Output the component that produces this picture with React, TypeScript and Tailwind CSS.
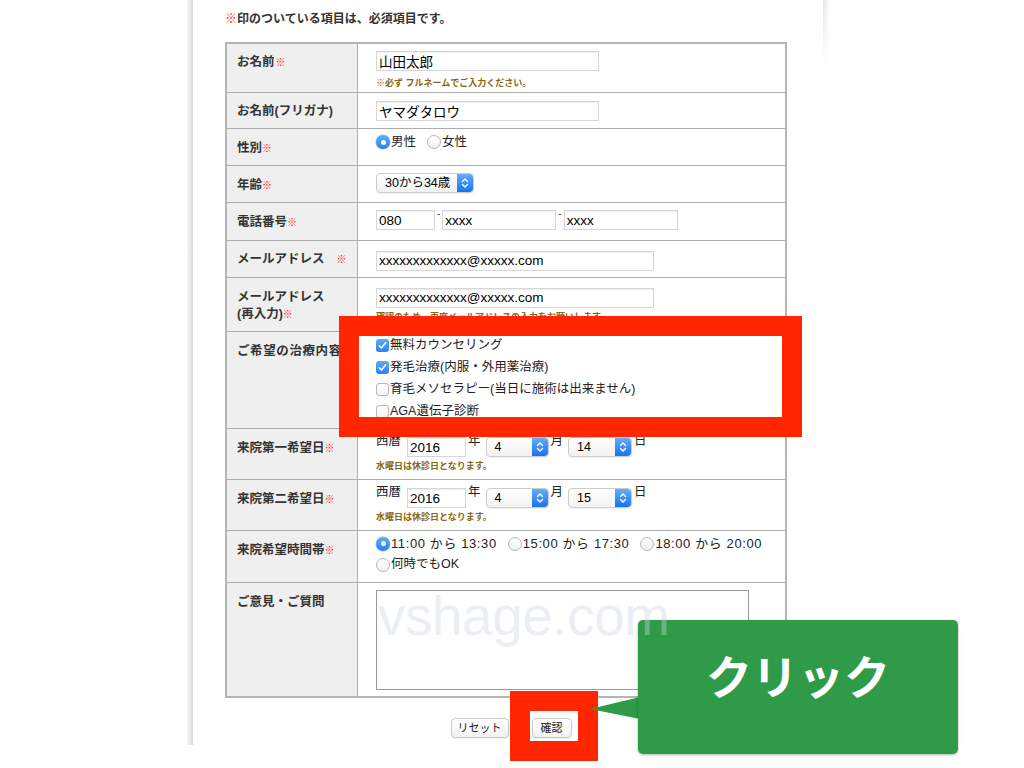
import React from "react";

const Req = ({ className = "" }: { className?: string }) => (
  <span className={`text-[10px] font-bold text-[#ff1a1a] ${className}`}>※</span>
);

const TextInput = ({ value, className }: { value: string; className: string }) => (
  <input
    readOnly
    value={value}
    className={`h-[20px] border border-[#d6d6d6] bg-white px-[2px] font-['Liberation_Sans','Noto_Sans_CJK_JP',sans-serif] text-[13.5px] leading-[18px] text-black shadow-[inset_0_1px_1px_rgba(0,0,0,0.07)] outline-none ${className}`}
  />
);

const Stepper = () => (
  <div className="flex w-[16px] shrink-0 items-center justify-center rounded-r-[4px] bg-gradient-to-b from-[#62adfb] to-[#1672ee]">
    <svg width="10" height="14" viewBox="0 0 10 14" fill="none">
      <path d="M2.5 5.5 L5 3 L7.5 5.5" stroke="white" strokeWidth="1.4" strokeLinecap="round" strokeLinejoin="round" />
      <path d="M2.5 8.5 L5 11 L7.5 8.5" stroke="white" strokeWidth="1.4" strokeLinecap="round" strokeLinejoin="round" />
    </svg>
  </div>
);

const Select = ({ value, className }: { value: string; className: string }) => (
  <div
    className={`flex h-[20px] shrink-0 items-stretch rounded-[4px] border border-[#cdcdcd] bg-gradient-to-b from-white to-[#f2f2f2] shadow-[0_1px_1px_rgba(0,0,0,0.06)] ${className}`}
  >
    <div className="flex-1 truncate pl-[8px] text-[12.5px] leading-[18px] text-black">{value}</div>
    <Stepper />
  </div>
);

const Radio = ({ checked, className = "" }: { checked?: boolean; className?: string }) =>
  checked ? (
    <span className={`flex h-[14px] w-[14px] shrink-0 items-center justify-center rounded-full bg-gradient-to-b from-[#5eaaf9] to-[#2a80f0] shadow-[0_0_0_0.5px_rgba(30,100,200,0.5)] ${className}`}>
      <span className="block h-[5px] w-[5px] rounded-full bg-white" />
    </span>
  ) : (
    <span className={`block h-[14px] w-[14px] shrink-0 rounded-full border border-[#b8b8b8] bg-gradient-to-b from-white to-[#f1f1f1] ${className}`} />
  );

const Check = ({ checked }: { checked?: boolean }) =>
  checked ? (
    <span className="flex h-[13px] w-[13px] shrink-0 items-center justify-center rounded-[3px] bg-gradient-to-b from-[#5eaaf9] to-[#2a80f0]">
      <svg width="11" height="11" viewBox="0 0 11 11" fill="none">
        <path d="M2.3 5.8 L4.4 8 L8.7 2.8" stroke="white" strokeWidth="1.6" strokeLinecap="round" strokeLinejoin="round" />
      </svg>
    </span>
  ) : (
    <span className="block h-[13px] w-[13px] shrink-0 rounded-[3px] border border-[#b8b8b8] bg-gradient-to-b from-white to-[#f4f4f4]" />
  );

const Note = ({ children, className = "" }: { children: React.ReactNode; className?: string }) => (
  <div className={`text-[9px] font-bold leading-[12px] text-[#8a6614] ${className}`}>{children}</div>
);

const Row = ({
  label,
  h,
  labelPt = "pt-[11px]",
  contentPt,
  last,
  children,
}: {
  label: React.ReactNode;
  h: string;
  labelPt?: string;
  contentPt: string;
  last?: boolean;
  children: React.ReactNode;
}) => (
  <div className={`flex ${h} ${last ? "" : "border-b border-[#acacac]"}`}>
    <div className={`w-[131px] shrink-0 border-r border-[#acacac] bg-[#efefef] pl-[10px] text-[12.5px] font-bold leading-[17px] text-[#333] ${labelPt}`}>
      {label}
    </div>
    <div className={`min-w-0 flex-1 pl-[18px] ${contentPt}`}>{children}</div>
  </div>
);

const DateRow = ({ day }: { day: string }) => (
  <div>
    <div className="flex items-start text-[12.5px] leading-[18px] text-[#222]">
      <span>西暦</span>
      <TextInput value="2016" className="ml-[6px] mt-[5px] w-[59px]" />
      <span className="ml-[2px]">年</span>
      <Select value="4" className="ml-[5px] mt-[5px] w-[63px]" />
      <span className="ml-[2px]">月</span>
      <Select value={day} className="ml-[5px] mt-[5px] w-[64px]" />
      <span className="ml-[2px]">日</span>
    </div>
    <Note className="mt-[3px]">水曜日は休診日となります。</Note>
  </div>
);

export default function App() {
  return (
    <div className="relative h-[768px] w-[1024px] overflow-hidden bg-white font-['Liberation_Sans','Noto_Sans_CJK_JP',sans-serif] text-[#333]">
      <div className="flex">
        <div className="ml-[187px] h-[745px] w-[6px] bg-gradient-to-r from-[#f5f5f5] to-[#dadada]" />
        <main className="w-[630px] pl-[32px] pt-[11px]">
          <div className="text-[12px] font-bold leading-[16px] text-[#333]">
            <span className="text-[#ff2a2a]">※</span>印のついている項目は、必須項目です。
          </div>

          <div className="mt-[15px] w-[562px] border-2 border-[#b4b4b4]">
            <Row label={<>お名前<Req className="ml-[1px]" /></>} h="h-[49px]" labelPt="pt-[10px]" contentPt="pt-[6px]">
              <TextInput value="山田太郎" className="w-[223px]" />
              <Note className="mt-[3px]">※必ず フルネームでご入力ください。</Note>
            </Row>

            <Row label="お名前(フリガナ)" h="h-[36px]" labelPt="pt-[10px]" contentPt="pt-[7px]">
              <TextInput value="ヤマダタロウ" className="w-[223px]" />
            </Row>

            <Row label={<>性別<Req /></>} h="h-[37px]" contentPt="pt-[3px]">
              <div className="flex h-[20px] items-center text-[12.5px] text-[#222]">
                <Radio checked />
                <span className="ml-[1px]">男性</span>
                <Radio className="ml-[11px]" />
                <span className="ml-[1px]">女性</span>
              </div>
            </Row>

            <Row label={<>年齢<Req /></>} h="h-[37px]" contentPt="pt-[7px]">
              <Select value="30から34歳" className="w-[98px]" />
            </Row>

            <Row label={<>電話番号<Req /></>} h="h-[38px]" contentPt="pt-[7px]">
              <div className="flex items-start">
                <TextInput value="080" className="w-[59px]" />
                <span className="mx-[2px] text-[10px] leading-[8px] text-[#444]">-</span>
                <TextInput value="xxxx" className="w-[114px]" />
                <span className="mx-[2px] text-[10px] leading-[8px] text-[#444]">-</span>
                <TextInput value="xxxx" className="w-[114px]" />
              </div>
            </Row>

            <Row label={<>メールアドレス<Req className="ml-[12px]" /></>} h="h-[37px]" labelPt="pt-[10px]" contentPt="pt-[7px]">
              <TextInput value="xxxxxxxxxxxxx@xxxxx.com" className="w-[278px]" />
            </Row>

            <Row label={<>メールアドレス<br />(再入力)<Req /></>} h="h-[54px]" labelPt="pt-[11px]" contentPt="pt-[7px]">
              <TextInput value="xxxxxxxxxxxxx@xxxxx.com" className="w-[278px]" />
              <Note className="mt-[2px]">確認のため、再度メールアドレスの入力をお願いします。</Note>
            </Row>

            <Row label={<span className="tracking-[0.6px]">ご希望の治療内容</span>} h="h-[97px]" contentPt="pt-[2px]">
              <div className="text-[12.5px] leading-[22px] text-[#222]">
                <div className="flex items-center"><Check checked /><span className="ml-[1px]">無料カウンセリング</span></div>
                <div className="flex items-center"><Check checked /><span className="ml-[1px]">発毛治療(内服・外用薬治療)</span></div>
                <div className="flex items-center"><Check /><span className="ml-[1px]">育毛メソセラピー(当日に施術は出来ません)</span></div>
                <div className="flex items-center"><Check /><span className="ml-[1px]">AGA遺伝子診断</span></div>
              </div>
            </Row>

            <Row label={<>来院第一希望日<Req /></>} h="h-[51px]" contentPt="pt-[3px]">
              <DateRow day="14" />
            </Row>

            <Row label={<>来院第二希望日<Req /></>} h="h-[51px]" contentPt="pt-[3px]">
              <DateRow day="15" />
            </Row>

            <Row label={<>来院希望時間帯<Req /></>} h="h-[52px]" contentPt="pt-[2px]">
              <div className="text-[13px] leading-[21px] text-[#222]">
                <div className="flex items-center">
                  <Radio checked />
                  <span className="ml-[1px] tracking-[0.6px]">11:00 から 13:30</span>
                  <Radio className="ml-[11px]" />
                  <span className="ml-[1px] tracking-[0.6px]">15:00 から 17:30</span>
                  <Radio className="ml-[11px]" />
                  <span className="ml-[1px] tracking-[0.6px]">18:00 から 20:00</span>
                </div>
                <div className="flex items-center">
                  <Radio />
                  <span className="ml-[1px] text-[12.5px]">何時でもOK</span>
                </div>
              </div>
            </Row>

            <Row label="ご意見・ご質問" h="h-[113px]" contentPt="pt-[7px]" last>
              <div className="h-[100px] w-[373px] border border-[#9a9a9a] bg-white" />
            </Row>
          </div>

          <div className="mt-[20px] flex w-[562px] justify-center gap-[23px] pl-[10px]">
            <button className="h-[20px] w-[58px] rounded-[4px] border border-[#c8c8c8] bg-gradient-to-b from-white to-[#f2f2f2] text-[11px] leading-[18px] text-[#222] shadow-[0_1px_1px_rgba(0,0,0,0.06)]">
              リセット
            </button>
            <button className="h-[20px] w-[40px] rounded-[4px] border border-[#c8c8c8] bg-gradient-to-b from-white to-[#f2f2f2] text-[11px] leading-[18px] text-[#222] shadow-[0_1px_1px_rgba(0,0,0,0.06)]">
              確認
            </button>
          </div>
        </main>
        <div className="h-[66px] w-[7px] bg-gradient-to-r from-[#e4e4e4] to-transparent [mask-image:linear-gradient(to_bottom,black,transparent)]" />
      </div>

      {/* annotation frames */}
      <div className="pointer-events-none absolute left-[339px] top-[316px] h-[121px] w-[463px] border-[20px] border-[#ff2600]" />
      <div className="pointer-events-none absolute left-[510px] top-[691px] h-[70px] w-[88px] border-[20px] border-[#ff2600]" />

      {/* callout */}
      <svg className="absolute left-[590px] top-[697px]" width="50" height="23" viewBox="0 0 50 23">
        <polygon points="0,12 50,0 50,22" fill="#2f9b48" />
      </svg>
      <div className="absolute left-[638px] top-[620px] h-[134px] w-[320px] rounded-[5px] bg-[#2f9b48] pt-[31px] text-center font-['Noto_Sans_CJK_JP',sans-serif] text-[46px] font-bold leading-[46px] text-white shadow-[0_1px_3px_rgba(0,0,0,0.3)]">
        クリック
      </div>

      {/* watermark */}
      <div className="pointer-events-none absolute left-[378px] top-[588px] font-['Liberation_Sans',sans-serif] text-[55px] leading-[56px] tracking-[-0.5px] text-[rgba(205,212,222,0.4)]">
        vshage.com
      </div>
    </div>
  );
}
